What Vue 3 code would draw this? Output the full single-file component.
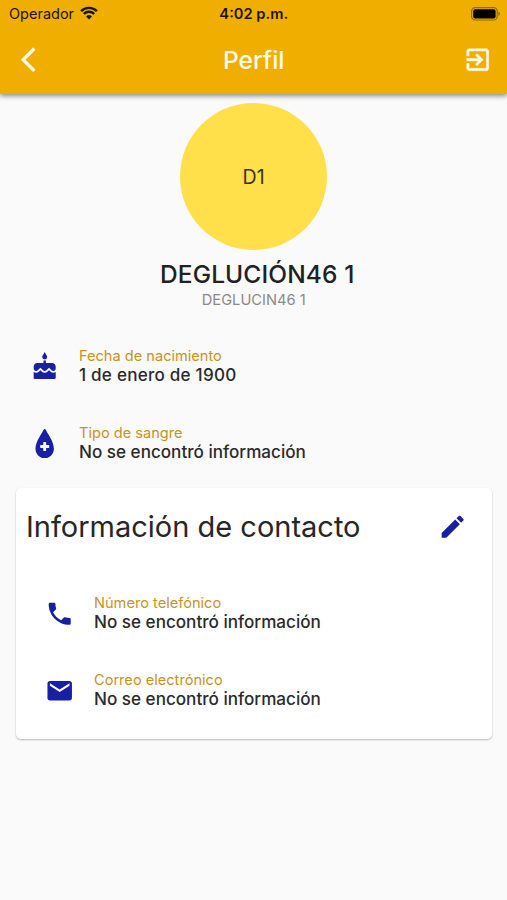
<template>
  <div class="pantalla">
    <!-- Encabezado con barra de estado y título -->
    <header class="encabezado">
      <div class="estado">
        <div class="operador">
          <span class="operador-texto">Operador</span>
          <svg class="wifi" viewBox="0 0 18 14">
            <path d="M1.1 5.1a11.2 11.2 0 0 1 15.8 0" />
            <path d="M3.8 7.9a7.4 7.4 0 0 1 10.4 0" />
            <path class="punto" d="M9 13.4l-2.9-2.9a4.1 4.1 0 0 1 5.8 0z" />
          </svg>
        </div>
        <span class="hora">4:02 p.m.</span>
        <svg class="bateria" viewBox="0 0 30 14">
          <rect class="borde" x="0.6" y="0.6" width="25.6" height="12.4" rx="3.6" />
          <rect x="2.2" y="2.2" width="22.4" height="9.2" rx="2" />
          <path class="polo" d="M27.4 4.8c1.9.4 1.9 3.6 0 4z" />
        </svg>
      </div>
      <div class="barra">
        <svg class="icono" viewBox="0 0 24 24">
          <path d="M11.67 3.87L9.9 2.1 0 12l9.9 9.9 1.77-1.77L3.54 12z" />
        </svg>
        <h1 class="titulo">Perfil</h1>
        <svg class="icono" viewBox="0 0 24 24">
          <path
            d="M10.09 15.59L11.5 17l5-5-5-5-1.41 1.41L12.67 11H3v2h9.67l-2.58 2.59zM19 3H5c-1.11 0-2 .9-2 2v4h2V5h14v14H5v-4H3v4c0 1.1.89 2 2 2h14c1.1 0 2-.9 2-2V5c0-1.1-.9-2-2-2z"
          />
        </svg>
      </div>
    </header>

    <main>
      <!-- Datos principales del usuario -->
      <section class="usuario">
        <div class="avatar">D1</div>
        <h2 class="nombre">DEGLUCIÓN46 1</h2>
        <p class="alias">DEGLUCIN46 1</p>
      </section>

      <section class="datos">
        <div class="dato" v-for="dato in personales" :key="dato.etiqueta">
          <svg class="icono" viewBox="0 0 24 24">
            <path :d="dato.icono" />
          </svg>
          <div>
            <p class="etiqueta">{{ dato.etiqueta }}</p>
            <p class="valor" :class="{ fecha: dato.fecha }">{{ dato.valor }}</p>
          </div>
        </div>
      </section>

      <!-- Tarjeta de contacto -->
      <section class="tarjeta">
        <div class="tarjeta-titulo">
          <h3>Información de contacto</h3>
          <svg class="icono" viewBox="0 0 24 24">
            <path
              d="M3 17.25V21h3.75L17.81 9.94l-3.75-3.75L3 17.25zM20.71 7.04c.39-.39.39-1.02 0-1.41l-2.34-2.34c-.39-.39-1.02-.39-1.41 0l-1.83 1.83 3.75 3.75 1.83-1.83z"
            />
          </svg>
        </div>
        <div class="dato" v-for="dato in contacto" :key="dato.etiqueta">
          <svg class="icono" viewBox="0 0 24 24">
            <path :d="dato.icono" />
          </svg>
          <div>
            <p class="etiqueta">{{ dato.etiqueta }}</p>
            <p class="valor">{{ dato.valor }}</p>
          </div>
        </div>
      </section>
    </main>
  </div>
</template>

<script setup>
const personales = [
  {
    etiqueta: "Fecha de nacimiento",
    valor: "1 de enero de 1900",
    fecha: true,
    icono:
      "M12 6c1.11 0 2-.9 2-2 0-.38-.1-.73-.29-1.03L12 0l-1.71 2.97c-.19.3-.29.65-.29 1.03 0 1.1.9 2 2 2zm4.6 9.99l-1.07-1.07-1.08 1.07c-1.3 1.3-3.58 1.31-4.89 0l-1.07-1.07-1.09 1.07C6.75 16.64 5.88 17 4.96 17c-.73 0-1.4-.23-1.96-.61V21c0 .55.45 1 1 1h16c.55 0 1-.45 1-1v-4.61c-.56.38-1.23.61-1.96.61-.92 0-1.79-.36-2.44-1.01zM18 9h-5V7h-2v2H6c-1.66 0-3 1.34-3 3v1.54c0 1.08.88 1.96 1.96 1.96.52 0 1.02-.2 1.38-.57l2.14-2.13 2.13 2.13c.74.74 2.03.74 2.77 0l2.14-2.13 2.13 2.13c.37.37.86.57 1.38.57 1.08 0 1.96-.88 1.96-1.96V12c0-1.66-1.34-3-3-3z",
  },
  {
    etiqueta: "Tipo de sangre",
    valor: "No se encontró información",
    icono:
      "M12 0C11.7 0 11.3.2 11.1.6 9.2 4.6 4.5 10.2 4.5 16.2 4.5 20.6 7.9 24 12 24s7.5-3.4 7.5-7.8C19.5 10.2 14.8 4.6 12.9.6 12.7.2 12.3 0 12 0zM11.4 10.6h1.2q.6 0 .6.6v1.9h1.9q.6 0 .6.6v1.2q0 .6-.6.6h-1.9v1.900q0 .6-.6.6h-1.2q-.6 0-.6-.6v-1.900H8.900q-.6 0-.6-.6v-1.200q0-.6.6-.6h1.900v-1.900q0-.6.6-.6z",
  },
];

const contacto = [
  {
    etiqueta: "Número telefónico",
    valor: "No se encontró información",
    icono:
      "M6.62 10.79c1.44 2.83 3.76 5.14 6.59 6.59l2.2-2.2c.27-.27.67-.36 1.02-.24 1.12.37 2.33.57 3.57.57.55 0 1 .45 1 1V20c0 .55-.45 1-1 1-9.39 0-17-7.61-17-17 0-.55.45-1 1-1h3.5c.55 0 1 .45 1 1 0 1.25.2 2.45.57 3.57.11.35.03.74-.25 1.02l-2.2 2.2z",
  },
  {
    etiqueta: "Correo electrónico",
    valor: "No se encontró información",
    icono:
      "M20 4H4c-1.1 0-1.99.9-1.99 2L2 18c0 1.1.9 2 2 2h16c1.1 0 2-.9 2-2V6c0-1.1-.9-2-2-2zm0 4l-8 5-8-5V6l8 5 8-5v2z",
  },
];
</script>

<style>
body {
  margin: 0;
  background: #fafafa;
}
</style>

<style scoped>
* {
  box-sizing: border-box;
}
h1,
h2,
h3,
p {
  margin: 0;
  white-space: nowrap;
}
.pantalla {
  height: 900px;
  overflow: hidden;
  background: #fafafa;
  color: #212121;
  font-family: Inter, "Liberation Sans", sans-serif;
}
.icono {
  display: block;
  flex: none;
  width: 29.4px;
  height: 29.4px;
  fill: currentColor;
}

/* Encabezado */
.encabezado {
  height: 94px;
  background: #f0ae00;
  box-shadow: 0 2px 5px rgba(0, 0, 0, 0.45);
}
.estado {
  display: grid;
  grid-template-columns: 1fr auto 1fr;
  align-items: center;
  height: 27px;
  padding: 0 6.5px 0 9px;
  color: #1b1500;
}
.operador {
  display: flex;
  align-items: center;
  gap: 6px;
}
.operador-texto {
  font-size: 14.5px;
}
.wifi {
  width: 18px;
  height: 14px;
  margin-bottom: 2px;
  fill: none;
  stroke: #1b1500;
  stroke-width: 2.4;
}
.wifi .punto {
  fill: #1b1500;
  stroke: none;
}
.hora {
  margin-right: 2px;
  font-size: 14.7px;
  font-weight: 600;
}
.bateria {
  justify-self: end;
  width: 30px;
  height: 14px;
}
.bateria .borde {
  fill: none;
  stroke: #8f6a05;
  stroke-width: 1.2;
}
.bateria .polo {
  fill: #8f6a05;
}
.barra {
  display: flex;
  align-items: center;
  justify-content: space-between;
  height: 65px;
  padding: 0 15px 0 20.5px;
  color: #fffbea;
}
.barra .icono {
  stroke: currentColor;
  stroke-width: 0.3;
}
.titulo {
  margin-right: 5px;
  font-size: 24.5px;
  font-weight: 500;
}

/* Usuario */
.usuario {
  display: flex;
  flex-direction: column;
  align-items: center;
  padding: 9.3px 0 0 0.5px;
}
.avatar {
  display: flex;
  align-items: center;
  justify-content: center;
  width: 147px;
  height: 147px;
  border-radius: 50%;
  background: #ffe04b;
  color: #3a3417;
  font-size: 19.6px;
  letter-spacing: 0.3px;
}
.nombre {
  margin-top: 9px;
  padding-left: 7px;
  font-size: 24.5px;
  font-weight: 450;
  letter-spacing: 0.12px;
  line-height: 30px;
}
.alias {
  margin-top: 2px;
  color: #8a8a8a;
  font-size: 14.7px;
  line-height: 18px;
}

/* Filas de datos */
.datos {
  padding: 18.5px 0 0 30px;
}
.dato {
  display: flex;
  align-items: center;
  gap: 19.6px;
  height: 77px;
  color: #1720a5;
}
.etiqueta {
  color: #c8921f;
  font-size: 14.6px;
  line-height: 18px;
}
.valor {
  color: #2a2a2a;
  font-size: 17.1px;
  font-weight: 450;
  line-height: 20px;
}
.fecha {
  letter-spacing: 0.22px;
}

/* Tarjeta */
.tarjeta {
  width: 476px;
  height: 251px;
  margin: 6.5px 0 0 16px;
  padding-left: 29px;
  border-radius: 5px;
  background: #fff;
  box-shadow: 0 1px 2px rgba(0, 0, 0, 0.26);
}
.tarjeta-titulo {
  display: flex;
  align-items: center;
  justify-content: space-between;
  height: 76px;
  margin: 0 24.5px 10.5px -19px;
  color: #1720a5;
}
.tarjeta-titulo h3 {
  color: #262626;
  font-size: 29px;
  font-weight: 400;
}
</style>
